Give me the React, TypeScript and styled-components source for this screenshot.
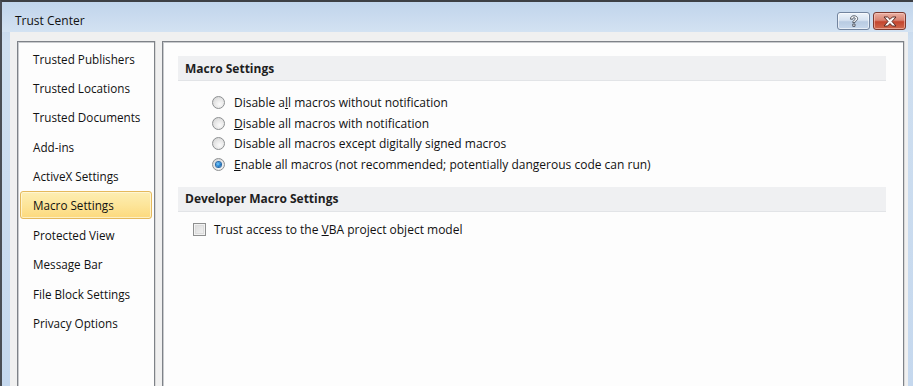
import React from "react";
import styled, { createGlobalStyle } from "styled-components";

const Global = createGlobalStyle`
  html, body { margin: 0; padding: 0; background: #f0f0f0; }
  body { font-family: "Open Sans", "Noto Sans", sans-serif; }
  * { box-sizing: border-box; }
`;

const Window = styled.div`
  width: 913px;
  height: 386px;
  overflow: hidden;
  display: flex;
  flex-direction: column;
  border-top: 2px solid #3c3f44;
  border-left: 2px solid #4a4e55;
  background: linear-gradient(180deg, #bcd1ea 0%, #cfdff0 40px, #c5d8ee 100%);
`;

const TitleBar = styled.div`
  height: 30px;
  flex: none;
  display: flex;
  align-items: flex-start;
  padding: 0 7px 0 13px;
  background: linear-gradient(180deg, #c0d4eb 0%, #d3e2f2 100%);
`;

const Title = styled.div`
  flex: 1;
  font-size: 12px;
  line-height: 16px;
  color: #111;
  padding-top: 11px;
`;

const Buttons = styled.div`
  display: flex;
  gap: 3px;
  margin-top: 10px;
`;

const CaptionButton = styled.div<{ $close?: boolean }>`
  width: 33px;
  height: 18px;
  border-radius: 3px;
  display: flex;
  align-items: center;
  justify-content: center;
  border: 1px solid ${(p) => (p.$close ? "#7c3a30" : "#72849e")};
  box-shadow: inset 0 0 0 1px ${(p) => (p.$close ? "rgba(255,210,200,0.55)" : "rgba(255,255,255,0.6)")};
  background: ${(p) =>
    p.$close
      ? "linear-gradient(180deg, #eab0a3 0%, #d98473 45%, #c3452e 55%, #cf6a4f 100%)"
      : "linear-gradient(180deg, #edf3fa 0%, #d7e3f1 45%, #b8cbe2 55%, #c7d8ec 100%)"};
`;

const Client = styled.div`
  flex: 1;
  margin: 0 5px 0 8px;
  background: #f0f0f0;
  display: flex;
  gap: 7px;
  padding: 9px 4px 0 7px;
  min-height: 0;
`;

const Panel = styled.div<{ $w: number }>`
  width: ${(p) => p.$w}px;
  flex: none;
  background: #fdfdfd;
  border: 1px solid #7e8288;
  border-bottom: none;
  box-shadow: inset 1px 1px 0 #c9cbce, 1px 0 0 #d8d8d8;
`;

const NavList = styled.div`
  display: flex;
  flex-direction: column;
  gap: 1.4px;
  padding: 2.5px 2px 0 2px;
`;

const NavItem = styled.div<{ $active?: boolean }>`
  height: 28px;
  display: flex;
  align-items: center;
  padding-left: 12px;
  font-size: 11.7px;
  color: #111;
  border-radius: 3px;
  border: 1px solid ${(p) => (p.$active ? "#e5b95c" : "transparent")};
  background: ${(p) =>
    p.$active ? "linear-gradient(180deg, #fdeeb3 0%, #fde59a 50%, #fcd97d 100%)" : "transparent"};
  box-shadow: ${(p) => (p.$active ? "inset 0 0 0 1px rgba(255,250,225,0.7)" : "none")};
`;

const Content = styled.div`
  padding: 14px 17px 0 15px;
`;

const SectionHeader = styled.div`
  height: 25px;
  display: flex;
  align-items: center;
  padding-left: 7px;
  font-size: 12px;
  font-weight: 700;
  color: #1e1e1e;
  background: #eff0f2;
  border-bottom: 1px solid #e2e4e7;
`;

const OptionGroup = styled.div<{ $top: number; $left: number }>`
  display: flex;
  flex-direction: column;
  padding: ${(p) => p.$top}px 0 0 ${(p) => p.$left}px;
`;

const OptionRow = styled.label<{ $h: number; $gap: number }>`
  height: ${(p) => p.$h}px;
  display: flex;
  align-items: center;
  gap: ${(p) => p.$gap}px;
  font-size: 12px;
  color: #111;
`;

const Radio = styled.span<{ $checked?: boolean }>`
  width: 13px;
  height: 13px;
  flex: none;
  border-radius: 50%;
  border: 1px solid #8d9092;
  background: radial-gradient(circle at 60% 65%, #fbfbfb 0%, #e4e4e4 55%, #cfcfcf 100%);
  display: flex;
  align-items: center;
  justify-content: center;
  &::after {
    content: "";
    display: ${(p) => (p.$checked ? "block" : "none")};
    width: 5px;
    height: 5px;
    border-radius: 50%;
    background: radial-gradient(circle at 40% 40%, #7fd0ff 0%, #1e7fcf 55%, #0b3f78 100%);
    box-shadow: 0 0 0 1px #2a6aa8;
  }
`;

const Checkbox = styled.span`
  width: 13px;
  height: 13px;
  flex: none;
  border: 1px solid #8e8f8f;
  box-shadow: inset 0 0 0 1px #f2f2f2, inset 0 0 0 2px #dcdcdc;
  background: linear-gradient(135deg, #d9d9d9 0%, #f4f4f4 100%);
`;

const Gap = styled.div<{ $h: number }>`
  height: ${(p) => p.$h}px;
`;

const HelpGlyph = () => (
  <svg width="12" height="13" viewBox="0 0 12 13">
    <path
      d="M2.5 4.2 C2.5 1.6 4.2 0.8 6 0.8 C8.2 0.8 9.6 2 9.6 3.6 C9.6 5.2 8.4 5.8 7.4 6.4 C7 6.7 7 7 7 7.6 L4.8 7.6 C4.8 6.4 5 5.9 6 5.3 C7 4.7 7.3 4.3 7.3 3.7 C7.3 3.1 6.8 2.7 6 2.7 C5.2 2.7 4.8 3.2 4.8 4.2 Z M4.8 9 L7 9 L7 11.4 L4.8 11.4 Z"
      fill="#fbfcfd"
      stroke="#545b66"
      strokeWidth="1"
      strokeLinejoin="round"
    />
  </svg>
);

const CloseGlyph = () => (
  <svg width="14" height="11" viewBox="0 0 14 11">
    <path
      d="M1 1 L4.6 1 L7 3.4 L9.4 1 L13 1 L9 5.5 L13 10 L9.4 10 L7 7.6 L4.6 10 L1 10 L5 5.5 Z"
      fill="#fafafa"
      stroke="#5a2a24"
      strokeWidth="1"
      strokeLinejoin="round"
    />
  </svg>
);

const navItems = [
  "Trusted Publishers",
  "Trusted Locations",
  "Trusted Documents",
  "Add-ins",
  "ActiveX Settings",
  "Macro Settings",
  "Protected View",
  "Message Bar",
  "File Block Settings",
  "Privacy Options",
];

export default function App() {
  return (
    <Window>
      <Global />
      <TitleBar>
        <Title>Trust Center</Title>
        <Buttons>
          <CaptionButton>
            <HelpGlyph />
          </CaptionButton>
          <CaptionButton $close>
            <CloseGlyph />
          </CaptionButton>
        </Buttons>
      </TitleBar>
      <Client>
        <Panel $w={138}>
          <NavList>
            {navItems.map((n) => (
              <NavItem key={n} $active={n === "Macro Settings"}>
                {n}
              </NavItem>
            ))}
          </NavList>
        </Panel>
        <Panel $w={742}>
          <Content>
            <SectionHeader>Macro Settings</SectionHeader>
            <OptionGroup $top={11} $left={34}>
              <OptionRow $h={20.7} $gap={9}>
                <Radio />
                <span>
                  Disable a<u>l</u>l macros without notification
                </span>
              </OptionRow>
              <OptionRow $h={20.7} $gap={9}>
                <Radio />
                <span>
                  <u>D</u>isable all macros with notification
                </span>
              </OptionRow>
              <OptionRow $h={20.7} $gap={9}>
                <Radio />
                <span>
                  Disable all macros except di<u>g</u>itally signed macros
                </span>
              </OptionRow>
              <OptionRow $h={20.7} $gap={9}>
                <Radio $checked />
                <span>
                  <u>E</u>nable all macros (not recommended; potentially dangerous code can run)
                </span>
              </OptionRow>
            </OptionGroup>
            <Gap $h={12} />
            <SectionHeader>Developer Macro Settings</SectionHeader>
            <OptionGroup $top={7} $left={15}>
              <OptionRow $h={22} $gap={8}>
                <Checkbox />
                <span>
                  Trust access to the <u>V</u>BA project object model
                </span>
              </OptionRow>
            </OptionGroup>
          </Content>
        </Panel>
      </Client>
    </Window>
  );
}
